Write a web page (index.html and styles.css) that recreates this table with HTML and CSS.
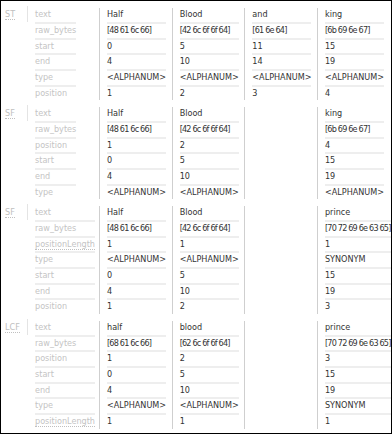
FILE: index.html
```
<!DOCTYPE html>
<html>
<head>
<meta charset="utf-8">
<link rel="stylesheet" href="styles.css">
</head>
<body>
<div class="frame">
  <section class="stage">
    <div class="analyzer"><abbr>ST</abbr></div>
    <div class="legend"><div class="list">
      <div class="cell">text</div><div class="cell">raw_bytes</div><div class="cell">start</div><div class="cell">end</div><div class="cell">type</div><div class="cell">position</div>
    </div></div>
    <div class="tok"><div class="list">
      <div class="cell">Half</div><div class="cell raw">[48 61 6c 66]</div><div class="cell">0</div><div class="cell">4</div><div class="cell">&lt;ALPHANUM&gt;</div><div class="cell">1</div>
    </div></div>
    <div class="tok"><div class="list">
      <div class="cell">Blood</div><div class="cell raw">[42 6c 6f 6f 64]</div><div class="cell">5</div><div class="cell">10</div><div class="cell">&lt;ALPHANUM&gt;</div><div class="cell">2</div>
    </div></div>
    <div class="tok"><div class="list">
      <div class="cell">and</div><div class="cell raw">[61 6e 64]</div><div class="cell">11</div><div class="cell">14</div><div class="cell">&lt;ALPHANUM&gt;</div><div class="cell">3</div>
    </div></div>
    <div class="tok last"><div class="list">
      <div class="cell">king</div><div class="cell raw">[6b 69 6e 67]</div><div class="cell">15</div><div class="cell">19</div><div class="cell">&lt;ALPHANUM&gt;</div><div class="cell">4</div>
    </div></div>
  </section>

  <section class="stage">
    <div class="analyzer"><abbr>SF</abbr></div>
    <div class="legend"><div class="list">
      <div class="cell">text</div><div class="cell">raw_bytes</div><div class="cell">position</div><div class="cell">start</div><div class="cell">end</div><div class="cell">type</div>
    </div></div>
    <div class="tok"><div class="list">
      <div class="cell">Half</div><div class="cell raw">[48 61 6c 66]</div><div class="cell">1</div><div class="cell">0</div><div class="cell">4</div><div class="cell">&lt;ALPHANUM&gt;</div>
    </div></div>
    <div class="tok"><div class="list">
      <div class="cell">Blood</div><div class="cell raw">[42 6c 6f 6f 64]</div><div class="cell">2</div><div class="cell">5</div><div class="cell">10</div><div class="cell">&lt;ALPHANUM&gt;</div>
    </div></div>
    <div class="tok empty"></div>
    <div class="tok last"><div class="list">
      <div class="cell">king</div><div class="cell raw">[6b 69 6e 67]</div><div class="cell">4</div><div class="cell">15</div><div class="cell">19</div><div class="cell">&lt;ALPHANUM&gt;</div>
    </div></div>
  </section>

  <section class="stage">
    <div class="analyzer"><abbr>SF</abbr></div>
    <div class="legend"><div class="list">
      <div class="cell">text</div><div class="cell">raw_bytes</div><div class="cell"><abbr>positionLength</abbr></div><div class="cell">type</div><div class="cell">start</div><div class="cell">end</div><div class="cell">position</div>
    </div></div>
    <div class="tok"><div class="list">
      <div class="cell">Half</div><div class="cell raw">[48 61 6c 66]</div><div class="cell">1</div><div class="cell">&lt;ALPHANUM&gt;</div><div class="cell">0</div><div class="cell">4</div><div class="cell">1</div>
    </div></div>
    <div class="tok"><div class="list">
      <div class="cell">Blood</div><div class="cell raw">[42 6c 6f 6f 64]</div><div class="cell">1</div><div class="cell">&lt;ALPHANUM&gt;</div><div class="cell">5</div><div class="cell">10</div><div class="cell">2</div>
    </div></div>
    <div class="tok empty"></div>
    <div class="tok last"><div class="list">
      <div class="cell">prince</div><div class="cell raw">[70 72 69 6e 63 65]</div><div class="cell">1</div><div class="cell">SYNONYM</div><div class="cell">15</div><div class="cell">19</div><div class="cell">3</div>
    </div></div>
  </section>

  <section class="stage">
    <div class="analyzer"><abbr>LCF</abbr></div>
    <div class="legend"><div class="list">
      <div class="cell">text</div><div class="cell">raw_bytes</div><div class="cell">position</div><div class="cell">start</div><div class="cell">end</div><div class="cell">type</div><div class="cell"><abbr>positionLength</abbr></div>
    </div></div>
    <div class="tok"><div class="list">
      <div class="cell">half</div><div class="cell raw">[68 61 6c 66]</div><div class="cell">1</div><div class="cell">0</div><div class="cell">4</div><div class="cell">&lt;ALPHANUM&gt;</div><div class="cell">1</div>
    </div></div>
    <div class="tok"><div class="list">
      <div class="cell">blood</div><div class="cell raw">[62 6c 6f 6f 64]</div><div class="cell">2</div><div class="cell">5</div><div class="cell">10</div><div class="cell">&lt;ALPHANUM&gt;</div><div class="cell">1</div>
    </div></div>
    <div class="tok empty"></div>
    <div class="tok last"><div class="list">
      <div class="cell">prince</div><div class="cell raw">[70 72 69 6e 63 65]</div><div class="cell">3</div><div class="cell">15</div><div class="cell">19</div><div class="cell">SYNONYM</div><div class="cell">1</div>
    </div></div>
  </section>
</div>
</body>
</html>
```

FILE: styles.css
```
html, body {
  margin: 0;
  padding: 0;
  background: #fff;
}

.frame {
  width: 392px;
  height: 434px;
  box-sizing: border-box;
  border: 1px solid #000;
  overflow: hidden;
  padding-top: 7.2px;
  font-family: "DejaVu Sans", sans-serif;
  font-stretch: condensed;
  font-size: 9px;
  color: #333;
}

.stage {
  display: flex;
  align-items: stretch;
  margin-bottom: 7px;
}

.analyzer {
  box-sizing: border-box;
  width: 27px;
  height: 16px;
  margin-top: -2px;
  padding-top: 2px;
  padding-left: 4px;
  line-height: 13.67px;
  border-right: 1px solid #e4e4e4;
  color: #c0c0c0;
  flex: none;
}

abbr {
  text-decoration: none;
  border-bottom: 1px dotted #c0c0c0;
}

.legend {
  box-sizing: border-box;
  width: 72px;
  padding-left: 7px;
  border-right: 1px solid #cfcfcf;
  color: #c4c4c4;
  flex: none;
}

.tok {
  box-sizing: border-box;
  width: 72.67px;
  padding-left: 7px;
  border-right: 1px solid #cfcfcf;
  flex: none;
}

.tok.last {
  border-right: 0;
  flex: 1 0 auto;
}

.list {
  display: grid;
  width: max-content;
}

.cell {
  line-height: 13.67px;
  border-top: 2px solid #eeeeee;
  white-space: nowrap;
}

.cell:first-child {
  border-top: 0;
}

.raw {
  letter-spacing: -0.8px;
}
```
